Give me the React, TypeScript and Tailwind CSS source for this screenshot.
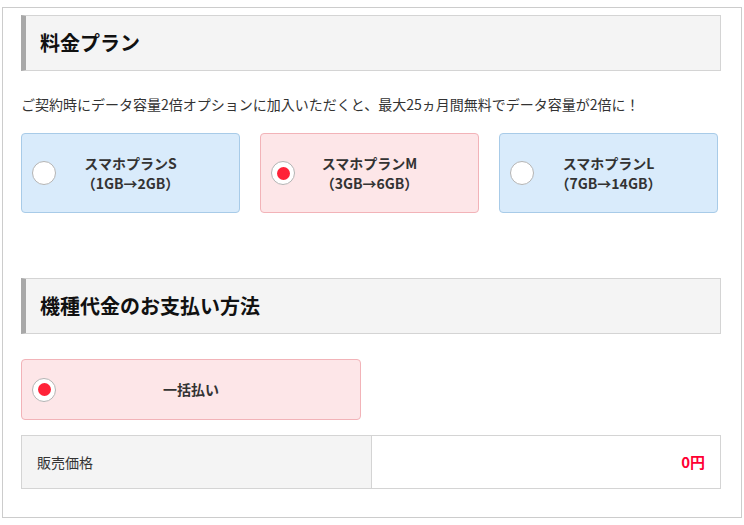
import React from 'react'

type Plan = { name: string; detail: string; selected?: boolean }

const plans: Plan[] = [
    { name: 'スマホプランS', detail: '（1GB→2GB）' },
    { name: 'スマホプランM', detail: '（3GB→6GB）', selected: true },
    { name: 'スマホプランL', detail: '（7GB→14GB）' },
]

const Radio = ({ on }: { on?: boolean }) => (
    <span className="absolute left-[10px] top-1/2 -translate-y-1/2 w-[24px] h-[24px] rounded-full bg-white border border-[#b4b4b4] flex items-center justify-center">
        {on && <span className="w-[13px] h-[13px] rounded-full bg-[#ff2238]" />}
    </span>
)

const Heading = ({ children }: { children: React.ReactNode }) => (
    <h2 className="h-[56px] flex items-center bg-[#f4f4f4] border border-[#d4d4d4] border-l-[5px] border-l-[#a8a8a8] pl-[14px] text-[20px] font-bold text-[#111]">
        {children}
    </h2>
)

export default function App() {
    return (
        <div className="w-[744px] h-[525px] bg-white pt-[7px] pl-[2px]" style={{ fontFamily: '"Noto Sans CJK JP", "Noto Sans", sans-serif' }}>
            <div className="w-[740px] border border-[#cccccc] pt-[7px] pl-[18px] pr-[20px] pb-[28px]">
                <Heading>料金プラン</Heading>
                <p className="mt-[23px] text-[14px] leading-[20px] text-[#333]">
                    ご契約時にデータ容量2倍オプションに加入いただくと、最大25ヵ月間無料でデータ容量が2倍に！
                </p>
                <div className="mt-[19px] flex gap-[20px]">
                    {plans.map((p) => (
                        <div
                            key={p.name}
                            className={`relative w-[219px] h-[80px] rounded-[4px] border flex flex-col items-center justify-center text-[14px] leading-[20px] font-bold text-[#333] ${p.selected ? 'bg-[#fde6e8] border-[#f2b3b8]' : 'bg-[#d9ebfb] border-[#a8cbe8]'}`}
                        >
                            <Radio on={p.selected} />
                            <span>{p.name}</span>
                            <span>{p.detail}</span>
                        </div>
                    ))}
                </div>

                <div className="mt-[65px]">
                    <Heading>機種代金のお支払い方法</Heading>
                </div>
                <div className="mt-[25px] relative w-[340px] h-[61px] rounded-[4px] border bg-[#fde6e8] border-[#f2b3b8] flex items-center justify-center text-[14px] font-bold text-[#333]">
                    <Radio on />
                    <span>一括払い</span>
                </div>

                <div className="mt-[15px] flex h-[54px] border border-[#d4d4d4]">
                    <div className="w-[350px] bg-[#f4f4f4] border-r border-[#d4d4d4] flex items-center pl-[15px] text-[14px] text-[#333]">
                        販売価格
                    </div>
                    <div className="flex-1 flex items-center justify-end pr-[15px] text-[15px] font-bold text-[#ff0033]">
                        0円
                    </div>
                </div>
            </div>
        </div>
    )
}
